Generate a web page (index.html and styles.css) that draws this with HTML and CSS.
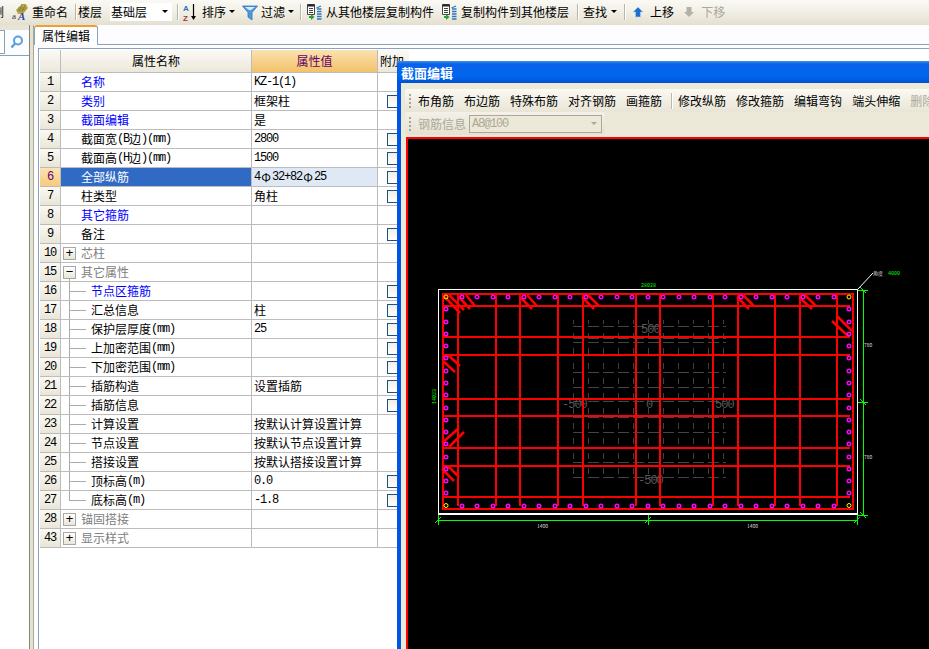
FILE: index.html
```html
<!DOCTYPE html>
<html lang="zh-CN">
<head>
<meta charset="utf-8">
<title>属性编辑</title>
<link rel="stylesheet" href="styles.css">
</head>
<body>
<div class="app">
  <div class="tb">
    <span class="clip">删</span>
    <svg class="ic ml8" viewBox="0 0 16 18"><path d="M4 7 10 1h4l2 4-5 6H6z" fill="#c9a23e"/><path d="M6 5h8M5 7h8M10 1 7 9M13 2l-3 7" stroke="#6d8a4a" stroke-width=".8"/><text x="0" y="16" class="ic-a">a</text><text x="6" y="17" class="ic-b">A</text></svg>
    <span class="ml4">重命名</span>
    <i class="sep ml7"></i>
    <span class="ml2">楼层</span>
    <span class="combo ml8">基础层<i class="caret"></i></span>
    <i class="sep ml5"></i>
    <svg class="ic ml4" viewBox="0 0 16 18"><text x="1" y="8" class="ic-s1">A</text><text x="1" y="17.500" class="ic-s2">Z</text><path d="M11.500 1v13" stroke="#000" stroke-width="1.200"/><path d="M9 13h5l-2.500 4z" fill="#000"/></svg>
    <span class="ml4">排序</span>
    <i class="caret ml3"></i>
    <svg class="ic ml7" viewBox="0 0 16 18"><path d="M.5 3h15L10 9.500V17L6 14V9.500z" fill="#4f9ad8" stroke="#2f74b0" stroke-width=".8"/><path d="M3 4h10L9 7H7z" fill="#d5ecfa"/></svg>
    <span class="ml3">过滤</span>
    <i class="caret ml3"></i>
    <i class="sep ml6"></i>
    <svg class="ic ml5" viewBox="0 0 16 18"><path d="M1.500 1.500h7v10h-7z" fill="#fff" stroke="#444"/><path d="M1.500 2.500h7" stroke="#222" stroke-width="2"/><path d="M3 5.500h4M3 7.500h4M3 9.500h4" stroke="#444"/><path d="M3 13h2v-2l3.500 3L5 17v-2H3z" fill="#2e9e3c"/><path d="M11 6h4.500M11 8.500h4.500M11 11h4.500M11 13.500h4.500M11 16h4.500" stroke="#2f78c0" stroke-width="1.500"/><path d="M10.500 5 15 3" stroke="#2f78c0" stroke-width="1.200"/></svg>
    <span class="ml4">从其他楼层复制构件</span>
    <svg class="ic ml7" viewBox="0 0 16 18"><path d="M1.500 1.500h7v10h-7z" fill="#fff" stroke="#444"/><path d="M1.500 2.500h7" stroke="#222" stroke-width="2"/><path d="M3 5.500h4M3 7.500h4M3 9.500h4" stroke="#444"/><path d="M3 13h2v-2l3.500 3L5 17v-2H3z" fill="#2e9e3c"/><path d="M11 6h4.500M11 8.500h4.500M11 11h4.500M11 13.500h4.500M11 16h4.500" stroke="#2f78c0" stroke-width="1.500"/><path d="M10.500 5 15 3" stroke="#2f78c0" stroke-width="1.200"/></svg>
    <span class="ml4">复制构件到其他楼层</span>
    <i class="sep ml8"></i>
    <span class="ml5">查找</span>
    <i class="caret ml4"></i>
    <i class="sep ml7"></i>
    <svg class="ic-sm ml7" viewBox="0 0 12 12"><path d="M6 1 11 6H8.500v5h-5V6H1z" fill="#1f6fd0" stroke="#b9d4ee" stroke-width=".6"/></svg>
    <span class="ml6">上移</span>
    <svg class="ic-sm ml9" viewBox="0 0 12 12"><path d="M6 11 11 6H8.500V1h-5v5H1z" fill="#b4b2a6"/></svg>
    <span class="ml6 off">下移</span>
  </div>

  <div class="main">
    <aside class="left">
      <div class="search">
        <span class="input"></span>
        <svg class="lens" viewBox="0 0 14 14"><circle cx="8" cy="5.500" r="4" fill="none" stroke="#5b9fe0" stroke-width="2"/><path d="M5 8.500 1.500 12.500" stroke="#5b9fe0" stroke-width="2.400"/></svg>
      </div>
    </aside>
    <div class="split"></div>
    <section class="pane">
      <div class="tabs"><span class="tab">属性编辑</span></div>
      <div class="grid">
        <div class="row head">
          <div class="num"></div>
          <div class="name">属性名称</div>
          <div class="val">属性值</div>
          <div class="add">附加</div>
        </div>
        <div class="row"><div class="num">1</div><div class="name link">名称</div><div class="val"><span class="lat">KZ-1(1)</span></div><div class="add"></div></div>
        <div class="row"><div class="num">2</div><div class="name link">类别</div><div class="val">框架柱</div><div class="add"><i class="box"></i></div></div>
        <div class="row"><div class="num">3</div><div class="name link">截面编辑</div><div class="val">是</div><div class="add"></div></div>
        <div class="row"><div class="num">4</div><div class="name">截面宽<span class="lat">(B</span>边<span class="lat">)(mm)</span></div><div class="val"><span class="lat">2800</span></div><div class="add"><i class="box"></i></div></div>
        <div class="row"><div class="num">5</div><div class="name">截面高<span class="lat">(H</span>边<span class="lat">)(mm)</span></div><div class="val"><span class="lat">1500</span></div><div class="add"><i class="box"></i></div></div>
        <div class="row sel"><div class="num">6</div><div class="name">全部纵筋</div><div class="val"><span class="lat">4</span><span class="bar">Φ</span><span class="lat">32+82</span><span class="bar">Φ</span><span class="lat">25</span></div><div class="add"><i class="box"></i></div></div>
        <div class="row"><div class="num">7</div><div class="name">柱类型</div><div class="val">角柱</div><div class="add"><i class="box"></i></div></div>
        <div class="row"><div class="num">8</div><div class="name link">其它箍筋</div><div class="val"></div><div class="add"></div></div>
        <div class="row"><div class="num">9</div><div class="name">备注</div><div class="val"></div><div class="add"><i class="box"></i></div></div>
        <div class="row"><div class="num">10</div><div class="name group"><i class="exp">+</i>芯柱</div><div class="val"></div><div class="add"></div></div>
        <div class="row"><div class="num">15</div><div class="name group open"><i class="exp">−</i>其它属性</div><div class="val"></div><div class="add"></div></div>
        <div class="row"><div class="num">16</div><div class="name child link">节点区箍筋</div><div class="val"></div><div class="add"><i class="box"></i></div></div>
        <div class="row"><div class="num">17</div><div class="name child">汇总信息</div><div class="val">柱</div><div class="add"><i class="box"></i></div></div>
        <div class="row"><div class="num">18</div><div class="name child">保护层厚度<span class="lat">(mm)</span></div><div class="val"><span class="lat">25</span></div><div class="add"><i class="box"></i></div></div>
        <div class="row"><div class="num">19</div><div class="name child">上加密范围<span class="lat">(mm)</span></div><div class="val"></div><div class="add"><i class="box"></i></div></div>
        <div class="row"><div class="num">20</div><div class="name child">下加密范围<span class="lat">(mm)</span></div><div class="val"></div><div class="add"><i class="box"></i></div></div>
        <div class="row"><div class="num">21</div><div class="name child">插筋构造</div><div class="val">设置插筋</div><div class="add"><i class="box"></i></div></div>
        <div class="row"><div class="num">22</div><div class="name child">插筋信息</div><div class="val"></div><div class="add"><i class="box"></i></div></div>
        <div class="row"><div class="num">23</div><div class="name child">计算设置</div><div class="val">按默认计算设置计算</div><div class="add"></div></div>
        <div class="row"><div class="num">24</div><div class="name child">节点设置</div><div class="val">按默认节点设置计算</div><div class="add"></div></div>
        <div class="row"><div class="num">25</div><div class="name child">搭接设置</div><div class="val">按默认搭接设置计算</div><div class="add"></div></div>
        <div class="row"><div class="num">26</div><div class="name child">顶标高<span class="lat">(m)</span></div><div class="val"><span class="lat">0.0</span></div><div class="add"><i class="box"></i></div></div>
        <div class="row"><div class="num">27</div><div class="name child last">底标高<span class="lat">(m)</span></div><div class="val"><span class="lat">-1.8</span></div><div class="add"><i class="box"></i></div></div>
        <div class="row"><div class="num">28</div><div class="name group"><i class="exp">+</i>锚固搭接</div><div class="val"></div><div class="add"></div></div>
        <div class="row"><div class="num">43</div><div class="name group"><i class="exp">+</i>显示样式</div><div class="val"></div><div class="add"></div></div>
      </div>
    </section>
  </div>

  <div class="dialog">
    <div class="title">截面编辑</div>
    <div class="dbody">
      <div class="dtb">
        <i class="grip"></i>
        <span class="first">布角筋</span>
        <span>布边筋</span>
        <span>特殊布筋</span>
        <span>对齐钢筋</span>
        <span>画箍筋</span>
        <i class="dsep"></i>
        <span class="after">修改纵筋</span>
        <span>修改箍筋</span>
        <span>编辑弯钩</span>
        <span>端头伸缩</span>
        <span class="off">删除</span>
      </div>
      <div class="dtb short">
        <i class="grip"></i>
        <span class="first off">钢筋信息</span>
        <span class="dcombo"><span class="lat">A8@100</span><i class="caret"></i></span>
      </div>
      <div class="canvas">
        <svg class="draw" viewBox="408 139 521 510">
          <g class="faint">
            <path d="M573 326H726M573 338H726M573 342H726M573 372H726M573 387H726M573 401H726M573 417H726M573 432H726M573 447H726M573 462H726M573 477H726"/>
          </g>
          <g class="faint-v">
            <path d="M573 320V482M588 320V482M603 320V482M618 320V482M633 320V482M648 320V482M663 320V482M678 320V482M693 320V482M708 320V482M723 320V482"/>
          </g>
          <text x="641" y="333" class="t500">500</text>
          <text x="562" y="408" class="t500">-500</text>
          <text x="646" y="408" class="t500">0</text>
          <text x="715" y="408" class="t500">500</text>
          <text x="638" y="484" class="t500">-500</text>

          <path class="white" d="M438.500 289.500H857.500V514H438.500z"/>
          <path class="white1" d="M858 289 873 273"/>

          <g class="red">
            <path d="M443 294H853V509H443z"/>
            <path d="M458 294V506M496 294V506M520 294V506M558 294V506M583 294V506M636 294V506M660 294V506M713 294V506M738 294V506M775 294V506M800 294V506M837 294V506"/>
            <path d="M443 306H850M443 337H850M443 355H850M443 399H850M443 416H850M443 448H850M443 466H850M443 497H850"/>
          </g>
          <g class="red-d">
            <path d="M445 297 460 313M449 295 464 310M458 296 470 309M466 295 475 306M520 297 532 309M527 295 537 306M582 297 594 309M588 295 599 306M737 297 749 309M743 295 754 306M799 297 812 309M805 295 816 306M832 321 849 337M837 316 852 331M443 361 455 372M448 355 460 366M442 443 459 428M449 447 464 432M442 469 454 481M448 466 459 477"/>
          </g>

          <g class="pink">
            <circle cx="462" cy="297" r="1.800"/><circle cx="477" cy="297" r="1.800"/><circle cx="493" cy="297" r="1.800"/><circle cx="508" cy="297" r="1.800"/><circle cx="524" cy="297" r="1.800"/><circle cx="539" cy="297" r="1.800"/><circle cx="555" cy="297" r="1.800"/><circle cx="570" cy="297" r="1.800"/><circle cx="586" cy="297" r="1.800"/><circle cx="601" cy="297" r="1.800"/><circle cx="617" cy="297" r="1.800"/><circle cx="632" cy="297" r="1.800"/><circle cx="648" cy="297" r="1.800"/><circle cx="663" cy="297" r="1.800"/><circle cx="679" cy="297" r="1.800"/><circle cx="694" cy="297" r="1.800"/><circle cx="710" cy="297" r="1.800"/><circle cx="725" cy="297" r="1.800"/><circle cx="741" cy="297" r="1.800"/><circle cx="756" cy="297" r="1.800"/><circle cx="772" cy="297" r="1.800"/><circle cx="787" cy="297" r="1.800"/><circle cx="803" cy="297" r="1.800"/><circle cx="818" cy="297" r="1.800"/><circle cx="834" cy="297" r="1.800"/>
            <circle cx="462" cy="506" r="1.800"/><circle cx="477" cy="506" r="1.800"/><circle cx="493" cy="506" r="1.800"/><circle cx="508" cy="506" r="1.800"/><circle cx="524" cy="506" r="1.800"/><circle cx="539" cy="506" r="1.800"/><circle cx="555" cy="506" r="1.800"/><circle cx="570" cy="506" r="1.800"/><circle cx="586" cy="506" r="1.800"/><circle cx="601" cy="506" r="1.800"/><circle cx="617" cy="506" r="1.800"/><circle cx="632" cy="506" r="1.800"/><circle cx="648" cy="506" r="1.800"/><circle cx="663" cy="506" r="1.800"/><circle cx="679" cy="506" r="1.800"/><circle cx="694" cy="506" r="1.800"/><circle cx="710" cy="506" r="1.800"/><circle cx="725" cy="506" r="1.800"/><circle cx="741" cy="506" r="1.800"/><circle cx="756" cy="506" r="1.800"/><circle cx="772" cy="506" r="1.800"/><circle cx="787" cy="506" r="1.800"/><circle cx="803" cy="506" r="1.800"/><circle cx="818" cy="506" r="1.800"/><circle cx="834" cy="506" r="1.800"/>
            <circle cx="446" cy="309" r="1.800"/><circle cx="446" cy="322" r="1.800"/><circle cx="446" cy="334" r="1.800"/><circle cx="446" cy="346" r="1.800"/><circle cx="446" cy="358" r="1.800"/><circle cx="446" cy="371" r="1.800"/><circle cx="446" cy="383" r="1.800"/><circle cx="446" cy="395" r="1.800"/><circle cx="446" cy="408" r="1.800"/><circle cx="446" cy="420" r="1.800"/><circle cx="446" cy="432" r="1.800"/><circle cx="446" cy="444" r="1.800"/><circle cx="446" cy="457" r="1.800"/><circle cx="446" cy="469" r="1.800"/><circle cx="446" cy="481" r="1.800"/><circle cx="446" cy="493" r="1.800"/>
            <circle cx="849" cy="309" r="1.800"/><circle cx="849" cy="322" r="1.800"/><circle cx="849" cy="334" r="1.800"/><circle cx="849" cy="346" r="1.800"/><circle cx="849" cy="358" r="1.800"/><circle cx="849" cy="371" r="1.800"/><circle cx="849" cy="383" r="1.800"/><circle cx="849" cy="395" r="1.800"/><circle cx="849" cy="408" r="1.800"/><circle cx="849" cy="420" r="1.800"/><circle cx="849" cy="432" r="1.800"/><circle cx="849" cy="444" r="1.800"/><circle cx="849" cy="457" r="1.800"/><circle cx="849" cy="469" r="1.800"/><circle cx="849" cy="481" r="1.800"/><circle cx="849" cy="493" r="1.800"/>
          </g>
          <g class="yellow">
            <circle cx="446" cy="297" r="2"/><circle cx="849" cy="297" r="2"/><circle cx="446" cy="505.500" r="2"/><circle cx="849" cy="505.500" r="2"/>
          </g>

          <g class="green">
            <path d="M863 290V515M858 290H868M858 515H868M858 402H868M860 287 866 293M860 399 866 405M860 512 866 518"/>
            <path d="M438 520H857M438 515V525M648 515V525M857 515V525M435 523 441 517M645 523 651 517M854 523 860 517"/>
          </g>
          <text x="641" y="287" class="lbl-g">28028</text>
          <text x="888" y="275" class="lbl-g">4000</text>
          <text x="873" y="275" class="lbl-w">角度</text>
          <text x="864" y="347" class="lbl-w">780</text>
          <text x="864" y="459" class="lbl-w">780</text>
          <text x="537" y="528" class="lbl-w">1400</text>
          <text x="747" y="528" class="lbl-w">1400</text>
          <text x="0" y="0" class="lbl-g" transform="translate(436 404) rotate(-90)">14023</text>
        </svg>
      </div>
    </div>
  </div>
</div>
</body>
</html>
```
FILE: styles.css
```css
* { box-sizing: border-box; }
html, body { margin: 0; height: 100%; overflow: hidden; background: #fff; }
body { font: 400 12px/18px "Noto Sans CJK SC", "Liberation Sans", sans-serif; color: #000; }
i { font-style: normal; display: block; }

.app { position: relative; width: 929px; height: 649px; overflow: hidden; display: flex; flex-direction: column; }

/* top toolbar */
.tb { height: 25px; flex: none; padding-bottom: 2px; display: flex; align-items: center; white-space: nowrap;
  background: linear-gradient(#faf9f4, #f3f1e8 40%, #e4e0d0); }
.clip { margin-left: -8px; width: 12px; }
.ic { width: 16px; height: 18px; flex: none; }
.ic-sm { width: 12px; height: 12px; flex: none; }
.ic-a { font: 9px "Liberation Serif", serif; fill: #333; }
.ic-b { font: italic bold 11px "Liberation Serif", serif; fill: #1d4fa8; }
.ic-s1 { font: bold 8px "Liberation Sans", sans-serif; fill: #2f6fb8; }
.ic-s2 { font: bold 8px "Liberation Sans", sans-serif; fill: #a03a3a; }
.ml2 { margin-left: 2px; } .ml3 { margin-left: 3px; } .ml4 { margin-left: 4px; }
.ml5 { margin-left: 5px; } .ml6 { margin-left: 6px; } .ml7 { margin-left: 7px; }
.ml8 { margin-left: 8px; } .ml9 { margin-left: 9px; }
.sep { width: 1px; height: 16px; background: #b8b5a5; box-shadow: 1px 0 0 #fff; flex: none; }
.caret { width: 0; height: 0; flex: none; border: 3px solid transparent; border-top-color: #000; border-bottom: 0; }
.combo { width: 62px; height: 18px; padding-left: 1px; background: #fff; display: flex; align-items: center; justify-content: space-between; padding-right: 4px; }
.off { color: #aca899; }

/* body */
.main { flex: 1; display: flex; min-height: 0; }
.left { width: 29px; flex: none; background: #fff; }
.search { height: 31px; padding-top: 5px; background: linear-gradient(#e8e4d5 5px, #fbfcfe 5px); border-bottom: 1px solid #8aa3bb; display: flex; align-items: flex-start; }
.input { width: 5px; height: 24px; background: #fff; border: 1px solid #8aa3bb; border-left: 0; flex: none; }
.lens { width: 14px; height: 14px; margin: 5px 0 0 5px; flex: none; }
.split { width: 5px; flex: none; background: #e6e2d2; border-left: 1px solid #85857a; border-right: 1px solid #a9a798; }

.pane { flex: 1; min-width: 0; background: #fdfdff; }
.tabs { height: 20px; border-bottom: 1px solid #8aa3bb; display: flex; background: #fdfdff; }
.tab { width: 64px; height: 20px; padding-left: 7px; background: #fff; border: 1px solid #8aa3bb; border-top: 2px solid #f0a030; border-bottom: 0; border-radius: 3px 3px 0 0; line-height: 17px; }
.grid { margin: 3px 0 0 4px; height: 620px; background: #fff; border-left: 1px solid #8aa3bb; border-top: 1px solid #8aa3bb; padding: 1px 0 0 1px; }
.row { display: grid; grid-template-columns: 21px 191px 126px 31px; height: 19px; }
.row > div { border-bottom: 1px solid #bcbcbc; border-right: 1px solid #bcbcbc; min-width: 0; white-space: nowrap; line-height: 18px; }
.num { text-align: center; background: linear-gradient(#faf9f3, #e9e6d8); font-family: "Liberation Mono", monospace; letter-spacing: -1.200px; }
.name { padding-left: 20px; display: flex; align-items: center; }
.val { padding-left: 2px; display: flex; align-items: center; }
.add { padding-left: 9px; display: flex; align-items: center; border-right: 0 !important; }
.head { height: 23px; }
.head > div { background: linear-gradient(#fbfaf6, #ebe8da); }
.head .name, .head .val { justify-content: center; padding-left: 0; }
.head .val { background: linear-gradient(#fae2b0, #f3c26a); color: #660066; }
.head .add { padding-left: 2px; }
.lat { font: 400 12px/18px "Liberation Mono", monospace; letter-spacing: -1.200px; }
.bar { width: 12px; text-align: center; font-size: 12px; }
.link { color: #0000ff; }
.group { color: #808080; padding-left: 2px; }
.exp { width: 13px; height: 13px; margin-right: 5px; flex: none; border: 1px solid #a8a8a0; background: linear-gradient(#fff, #e8e6da); color: #000; text-align: center; font: 13px/10px "Liberation Sans", sans-serif; }
.child { padding-left: 30px;
  background: linear-gradient(#aaa, #aaa) 8px 0 / 1px 100% no-repeat, linear-gradient(#aaa, #aaa) 8px 9px / 17px 1px no-repeat; }
.child.last { background: linear-gradient(#aaa, #aaa) 8px 0 / 1px 10px no-repeat, linear-gradient(#aaa, #aaa) 8px 9px / 17px 1px no-repeat; }
.open { background: linear-gradient(#aaa, #aaa) 8px 15px / 1px 3px no-repeat; }
.sel .num { background: linear-gradient(#fbe3b4, #f6ca7c); color: #660066; }
.sel .name { background: #316ac5; color: #fff; }
.sel .val { background: #dfe8f5; }
.box { width: 13px; height: 13px; flex: none; border: 1px solid #1c5180; background: linear-gradient(#f0efe6, #fff); }

/* floating dialog window */
.dialog { position: absolute; left: 397px; top: 61px; width: 560px; height: 620px; background: #0055e5; display: flex; flex-direction: column; }
.title { height: 22px; flex: none; padding-left: 4px; color: #fff; font-weight: 700; font-size: 13px; line-height: 23px;
  background: linear-gradient(#3b8fe8, #0a62ea 3px, #0066ee 70%, #0058dc 90%, #004fd0); }
.dbody { flex: 1; margin-left: 4px; background: #ece9d8; padding: 6px 0 0 4px; }
.dtb { height: 23px; display: flex; align-items: center; gap: 10px; white-space: nowrap; background: linear-gradient(#faf9f3, #e8e5d6); border-radius: 3px 0 0 3px; }
.short { width: 200px; gap: 0; border-radius: 3px; background: linear-gradient(#f3f1e8, #e4e1d1); }
.grip { width: 2px; height: 14px; margin-left: 4px; margin-right: -3px; flex: none; background: repeating-linear-gradient(#a8a594 0 2px, transparent 2px 4px); }
.short .grip { margin-right: 7px; }
.dsep { width: 1px; height: 16px; background: #bdb9a6; box-shadow: 1px 0 0 #fff; flex: none; margin: 0 -4px 0 -1px; }
.dcombo { width: 133px; height: 18px; margin-left: 3px; padding: 0 4px 0 2px; background: #ece9d8; border: 1px solid #aca899; color: #aca899; display: flex; align-items: center; justify-content: space-between; }
.dcombo .caret { border-top-color: #aca899; }
.canvas { margin: 2px 0 0 1px; height: 520px; background: #000; border-top: 2px solid #f00; border-left: 2px solid #f00; }
.draw { display: block; width: 521px; height: 510px; }
.draw path, .draw circle { fill: none; }
.faint path { stroke: #444; stroke-width: 1; stroke-dasharray: 11 4; shape-rendering: crispEdges; }
.faint-v path { stroke: #404040; stroke-width: 1; stroke-dasharray: 6 9; stroke-dashoffset: 2; shape-rendering: crispEdges; }
.t500 { font: 400 12px "Liberation Mono", monospace; fill: #5a5a5a; letter-spacing: -1px; }
.white { stroke: #fff; stroke-width: 1.500; shape-rendering: crispEdges; }
.white1 { stroke: #fff; stroke-width: 1; }
.red path { stroke: #f00; stroke-width: 2; }
.red-d path { stroke: #f00; stroke-width: 2.600; }
.pink circle { stroke: #f0f; stroke-width: 1.400; }
.yellow circle { stroke: #ff0; stroke-width: 1; }
.green path { stroke: #0f0; stroke-width: 1; shape-rendering: crispEdges; }
.lbl-g { font: 400 5px "Liberation Mono", monospace; fill: #0f0; }
.lbl-w { font: 400 5px "Noto Sans CJK SC", "Liberation Mono", monospace; fill: #ddd; }
```
